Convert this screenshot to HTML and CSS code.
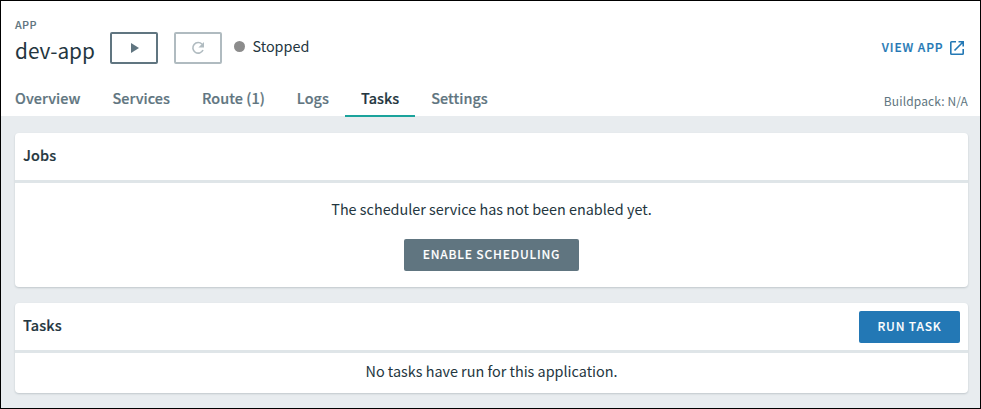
FILE: index.html
```html
<!DOCTYPE html>
<html lang="en">
<head>
<meta charset="utf-8">
<title>dev-app</title>
<link rel="stylesheet" href="styles.css">
</head>
<body>
<div class="page">
  <header class="header">
    <div class="title-row">
      <div class="identity">
        <div class="eyebrow">APP</div>
        <h1 class="app-name">dev-app</h1>
      </div>
      <button class="icon-btn start" aria-label="Start"><svg width="10" height="12" viewBox="0 0 10 12"><path d="M1 1l8 5-8 5z" fill="#607580"/></svg></button>
      <button class="icon-btn disabled" aria-label="Restart"><svg width="14" height="14" viewBox="0 0 14 14"><path d="M11.1 3.3A5.3 5.3 0 1 0 12 9" fill="none" stroke="#b0bbc0" stroke-width="1.6"/><path d="M13 1v5.6H7.4z" fill="#b0bbc0"/></svg></button>
      <div class="status"><span class="dot"></span><span class="status-text">Stopped</span></div>
      <a class="view-app"><span>VIEW APP</span><svg width="14" height="14" viewBox="0 0 14 14"><path d="M6 .8H1.6a.8.8 0 0 0-.8.8v10.800a.8.8 0 0 0 .8.8h10.800a.8.8 0 0 0 .8-.8V8M8.500.8h4.700v4.700M13 1L4.500 9.500" fill="none" stroke="#2378b5" stroke-width="1.600"/></svg></a>
    </div>
    <div class="nav-row">
      <nav class="tabs">
        <a class="tab">Overview</a>
        <a class="tab">Services</a>
        <a class="tab">Route (1)</a>
        <a class="tab">Logs</a>
        <a class="tab active">Tasks</a>
        <a class="tab">Settings</a>
      </nav>
      <div class="buildpack">Buildpack: N/A</div>
    </div>
  </header>
  <main class="content">
    <section class="card">
      <div class="card-head"><h2>Jobs</h2></div>
      <div class="card-body jobs">
        <p>The scheduler service has not been enabled yet.</p>
        <button class="btn enable">ENABLE SCHEDULING</button>
      </div>
    </section>
    <section class="card">
      <div class="card-head"><h2>Tasks</h2><button class="btn run">RUN TASK</button></div>
      <div class="card-body empty"><p>No tasks have run for this application.</p></div>
    </section>
  </main>
</div>
</body>
</html>
```

FILE: styles.css
```css
* { box-sizing: border-box; margin: 0; padding: 0; }
body { font-family: "Noto Sans CJK SC", "Noto Sans", sans-serif; color: #243640; font-size: 14.4px; line-height: 20px; white-space: nowrap; }
button { font-family: inherit; }
svg { display: block; }
.page { width: 981px; height: 409px; border: 1px solid #000; background: #e8ecef; display: flex; flex-direction: column; overflow: hidden; }
.header { background: #fff; height: 115px; padding: 0 12px 0 14px; flex: none; }
.title-row { display: flex; height: 78px; align-items: flex-start; }
.identity { width: 95px; padding-top: 16px; }
.eyebrow { font-size: 10.8px; line-height: 14px; color: #607580; font-weight: 500; letter-spacing: .4px; -webkit-text-stroke: .1px; }
.app-name { font-size: 20.8px; line-height: 28px; font-weight: 400; margin-top: 5px; }
.icon-btn { width: 48px; height: 32px; margin: 31px 16px 0 0; border: 2px solid #607580; border-radius: 2px; background: #fff; display: flex; align-items: center; justify-content: center; }
.icon-btn.start { padding-left: 2px; }
.icon-btn.disabled { border-color: #b0bbc0; margin-right: 11.5px; }
.status { display: flex; align-items: center; gap: 8px; margin-top: 35px; height: 20px; }
.dot { width: 11px; height: 11px; border-radius: 50%; background: #8c8c8c; }
.view-app { display: flex; align-items: center; gap: 6.5px; margin: 37px 4px 0 auto; color: #2378b5; font-size: 12px; font-weight: 500; letter-spacing: .9px; height: 20px; -webkit-text-stroke: .2px; }
.view-app span { padding-bottom: 2px; }
.nav-row { display: flex; justify-content: space-between; height: 38px; }
.tabs { display: flex; gap: 32px; }
.tab { height: 38px; line-height: 38px; color: #607580; font-weight: 500; letter-spacing: .05px; -webkit-text-stroke: .2px; }
.tab.active { color: #243640; border-bottom: 2px solid #1ba39c; padding: 0 16px; margin: 0 -16px; }
.buildpack { font-size: 12px; line-height: 44px; color: #607580; letter-spacing: .13px; }
.content { padding: 17px 12px 0 14px; display: flex; flex-direction: column; gap: 16px; }
.card { background: #fff; border-radius: 4px; box-shadow: 0 1px 2px rgba(36,54,64,.2); }
.card-head { height: 50px; padding: 0 8px; display: flex; align-items: center; justify-content: space-between; border-bottom: 3px solid #dfe5e8; }
h2 { font-size: 14.4px; line-height: 20px; font-weight: 500; letter-spacing: .15px; margin-bottom: 4px; -webkit-text-stroke: .2px; }
.card-body { display: flex; flex-direction: column; align-items: center; }
.jobs { height: 104px; padding-top: 16px; gap: 20px; }
.empty { height: 40px; padding-top: 8px; }
.btn { height: 32px; border: 0; border-radius: 2px; color: #fff; font-size: 12px; font-weight: 500; letter-spacing: .8px; padding-bottom: 3px; -webkit-text-stroke: .1px; }
.enable { width: 175px; background: #607580; }
.run { width: 101px; background: #2378b5; }
```
